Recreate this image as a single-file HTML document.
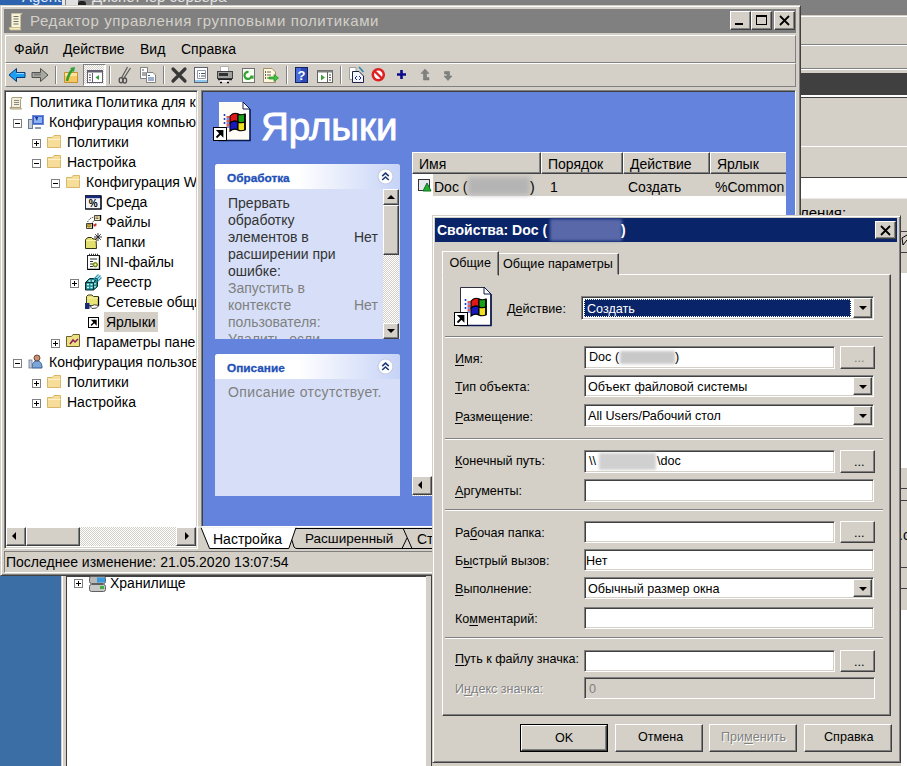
<!DOCTYPE html>
<html><head><meta charset="utf-8">
<style>
*{margin:0;padding:0;box-sizing:border-box}
html,body{width:907px;height:766px;overflow:hidden;background:#D4D0C8}
body{position:relative;font-family:"Liberation Sans",sans-serif;font-size:14px;color:#000}
.a{position:absolute}
.t{position:absolute;white-space:pre;line-height:1}
.raised{border:1px solid;border-color:#fff #404040 #404040 #fff;box-shadow:inset -1px -1px #808080,inset 1px 1px #D4D0C8;background:#D4D0C8}
.sunk{border:1px solid;border-color:#808080 #fff #fff #808080;box-shadow:inset 1px 1px #404040,inset -1px -1px #D4D0C8;background:#fff}
.thin{border:1px solid;border-color:#808080 #fff #fff #808080}
.winframe{border:1px solid;border-color:#D4D0C8 #404040 #404040 #D4D0C8;box-shadow:inset 1px 1px #fff,inset -1px -1px #808080;background:#D4D0C8}
.hsep{height:2px;border-top:1px solid #808080;border-bottom:1px solid #fff}
.vsep{width:2px;border-left:1px solid #808080;border-right:1px solid #fff}
.dl{font-size:12.6px}
u{text-decoration:underline;text-underline-offset:1.5px;text-decoration-thickness:1px}
.tp{font-size:14px}
.dither{background-color:#fff;background-image:linear-gradient(45deg,#D4D0C8 25%,transparent 25%,transparent 75%,#D4D0C8 75%),linear-gradient(45deg,#D4D0C8 25%,transparent 25%,transparent 75%,#D4D0C8 75%);background-size:2px 2px;background-position:0 0,1px 1px}
</style></head><body>

<!-- ===== background: top strip ===== -->
<div class="a" style="left:0;top:0;width:907px;height:15px;background:#808080"></div>
<div class="a" style="left:0;top:0;width:62px;height:5px;background:#2D62AE"></div>
<div class="t" style="left:22px;top:-11px;font-size:15px;color:#DDEBFF">Agent</div>
<div class="a" style="left:62px;top:0;width:3px;height:5px;background:#E8E8E8"></div>
<div class="a" style="left:66px;top:0;width:12px;height:5px;background:#E0E0E0"></div>
<div class="a" style="left:78px;top:1px;width:8px;height:4px;background:#202020;border-radius:3px 3px 0 0"></div>
<div class="t" style="left:92px;top:-11px;font-size:15px;color:#E4E4E4">Диспетчер сервера</div>
<!-- ===== background: right window ===== -->
<div class="a" style="left:800px;top:15px;width:107px;height:751px;background:#D4D0C8"></div>
<div class="a" style="left:800px;top:15px;width:107px;height:1px;background:#D4D0C8"></div>
<div class="a" style="left:800px;top:16px;width:107px;height:1px;background:#fff"></div>
<div class="a" style="left:800px;top:44px;width:107px;height:1px;background:#808080"></div>
<div class="a" style="left:800px;top:45px;width:107px;height:1px;background:#fff"></div>
<div class="a" style="left:800px;top:68px;width:107px;height:1px;background:#808080"></div>
<div class="a" style="left:800px;top:69px;width:107px;height:1px;background:#fff"></div>
<div class="a" style="left:800px;top:73px;width:107px;height:22px;background:#404040"></div>
<div class="a" style="left:800px;top:95px;width:107px;height:1.5px;background:#fff"></div>
<div class="a" style="left:800px;top:97px;width:107px;height:1px;background:#404040"></div>
<div class="a" style="left:800px;top:146px;width:107px;height:1px;background:#fff"></div>
<div class="a" style="left:800px;top:177px;width:107px;height:1px;background:#404040"></div>
<div class="a" style="left:800px;top:178px;width:107px;height:20px;background:#fff"></div>
<div class="a" style="left:800px;top:198px;width:107px;height:1px;background:#E8E8E8"></div>
<div class="t" style="left:800px;top:204.5px;font-size:15px;color:#000">ления:</div>
<div class="a" style="left:901px;top:231px;width:6px;height:1px;background:#404040"></div>
<div class="a" style="left:901px;top:252px;width:6px;height:1px;background:#404040"></div>
<div class="a" style="left:901px;top:273px;width:6px;height:195px;background:#fff"></div>
<div class="a" style="left:901px;top:488px;width:6px;height:1px;background:#404040"></div>
<div class="a" style="left:901px;top:500px;width:6px;height:1px;background:#404040"></div>
<div class="a" style="left:901px;top:567px;width:6px;height:1px;background:#404040"></div>
<div class="a" style="left:901px;top:588px;width:6px;height:1px;background:#404040"></div>
<div class="a" style="left:901px;top:610px;width:6px;height:156px;background:#fff"></div>
<svg class="a" style="left:901px;top:234px" width="6" height="14"><path d="M1 4 L6 1 M1 4 L2 11 L6 6" stroke="#000" stroke-width="1" fill="none"/></svg>
<div class="t" style="left:899px;top:527.5px;font-size:14px">.c</div>
<!-- ===== background: bottom-left window ===== -->
<div class="a" style="left:0;top:576px;width:61px;height:190px;background:#3A6EA5"></div>
<div class="a" style="left:61px;top:575px;width:371px;height:191px;background:#D4D0C8"></div>
<div class="a" style="left:62px;top:575px;width:1px;height:191px;background:#fff"></div>
<div class="a" style="left:66px;top:576px;width:360px;height:190px;background:#fff;border-left:1px solid #404040;border-top:1px solid #404040"></div>
<div class="a" style="left:431px;top:576px;width:1px;height:190px;background:#404040"></div>
<div class="a" style="left:74px;top:579px;width:9px;height:9px;border:1px solid #808080;background:#fff"><div class="a" style="left:1px;top:3px;width:5px;height:1px;background:#000"></div><div class="a" style="left:3px;top:1px;width:1px;height:5px;background:#000"></div></div>
<svg class="a" style="left:89px;top:576px" width="18" height="16"><rect x="0.5" y="0.5" width="16" height="7" rx="2" fill="#B8B8B8" stroke="#606060"/><rect x="8" y="1.5" width="8" height="5" fill="#3A9AE0"/><rect x="0.5" y="8.5" width="16" height="7" rx="2" fill="#C8C8C8" stroke="#606060"/><rect x="11" y="10" width="4" height="3" fill="#40B040"/></svg>
<div class="t" style="left:110px;top:575.5px">Хранилище</div>
<!-- ===== main window ===== -->
<div id="main" class="a winframe" style="left:0;top:5px;width:801px;height:571px"></div>
<!-- title bar -->
<div class="a" style="left:4px;top:9px;width:792px;height:24px;background:#808080"></div>
<div class="t" style="left:30px;top:13px;font-size:15px;letter-spacing:0.6px;color:#D4D0C8">Редактор управления групповыми политиками</div>
<div class="a raised" style="left:730px;top:11px;width:21px;height:19px"><div class="a" style="left:4px;top:11px;width:8px;height:2px;background:#000"></div></div>
<div class="a raised" style="left:751px;top:11px;width:21px;height:19px"><div class="a" style="left:4px;top:3px;width:11px;height:10px;border:1px solid #000;border-top-width:2px"></div></div>
<div class="a raised" style="left:774px;top:11px;width:21px;height:19px"><svg class="a" style="left:4px;top:3px" width="12" height="11"><path d="M1 1L10 10M10 1L1 10" stroke="#000" stroke-width="1.8"/></svg></div>
<!-- menubar -->
<div class="a" style="left:5px;top:35px;width:791px;height:28px;border:1px solid;border-color:#fff #808080 #808080 #fff"></div>
<div class="t" style="left:14px;top:42px">Файл</div>
<div class="t" style="left:63px;top:42px">Действие</div>
<div class="t" style="left:140px;top:42px">Вид</div>
<div class="t" style="left:181px;top:42px">Справка</div>
<!-- toolbar -->
<div class="a" style="left:5px;top:63px;width:791px;height:24px;border:1px solid;border-color:#fff #808080 #808080 #fff"></div>
<!-- tree pane -->
<div class="a sunk" style="left:4px;top:90px;width:194px;height:459px"></div>
<!-- toolbar icons -->
<svg class="a" style="left:6px;top:64px" width="460" height="22">
<!-- back -->
<path d="M3 11 L10.5 4.5 V8.5 H19 V13.5 H10.5 V17.5 Z" fill="#1EA0F0" stroke="#0A3A7A" stroke-width="1"/>
<path d="M10.5 9.5 H18" stroke="#9AD8FF" stroke-width="1"/>
<!-- forward -->
<path d="M42 11 L34.5 4.5 V8.5 H26 V13.5 H34.5 V17.5 Z" fill="#A8A8A0" stroke="#505050" stroke-width="1"/>
<path d="M28 10.5 H35" stroke="#808080" stroke-width="2"/>
<!-- sep -->
<path d="M49.5 2 V20" stroke="#808080"/><path d="M50.5 2 V20" stroke="#fff"/>
<!-- up folder -->
<path d="M58.5 8.5 H71.5 V18.5 H58.5 Z" fill="#F6C860" stroke="#C89030"/>
<path d="M59 9 H71 V12 H59z" fill="#FBE6A8"/>
<path d="M61 17 C 62 12, 64 8, 67 5" stroke="#30A030" stroke-width="2.5" fill="none"/>
<path d="M64 4 L69 3 L68 8 Z" fill="#30A030"/>
<!-- pressed button -->
<rect x="77" y="0" width="22" height="21" fill="#fff"/>
</svg>
<div class="a dither" style="left:84px;top:65px;width:20px;height:19px"></div>
<div class="a" style="left:83px;top:64px;width:23px;height:22px;border:1px solid;border-color:#808080 #fff #fff #808080"></div>
<svg class="a" style="left:86px;top:69px" width="18" height="15">
<rect x="1.5" y="1.5" width="15" height="12" fill="#fff" stroke="#606070"/>
<rect x="1.5" y="1.5" width="15" height="2" fill="#606070"/>
<path d="M6.5 4 V13.5" stroke="#606070"/>
<path d="M3 6h2M3 8.5h2M3 11h2" stroke="#606070"/>
<path d="M13 6 L9.5 8.5 L13 11z" fill="#30A030"/>
</svg>
<svg class="a" style="left:6px;top:64px" width="460" height="22" style="pointer-events:none">
<path d="M103.5 2 V20" stroke="#808080"/><path d="M104.5 2 V20" stroke="#fff"/>
<!-- scissors -->
<path d="M121.5 3 L 115.5 14 M 124.5 4 L 118 14" stroke="#606060" stroke-width="1.3" fill="none"/>
<ellipse cx="115" cy="16.2" rx="1.8" ry="2.6" fill="none" stroke="#505050" stroke-width="1.3"/>
<ellipse cx="118.8" cy="16.6" rx="1.8" ry="2.6" fill="none" stroke="#505050" stroke-width="1.3"/>
<!-- copy -->
<path d="M134.5 3.5 H141.5 V14.5 H134.5z" fill="#fff" stroke="#808080"/>
<path d="M136 6h2M136 9h4M136 11h4" stroke="#505050"/>
<path d="M140.5 8.5 H147 L149.5 11 V18.5 H140.5z" fill="#fff" stroke="#808080"/>
<path d="M142 11.5h2M142 14h6M142 16h6" stroke="#3A5A9A"/>
<path d="M157.5 2 V20" stroke="#808080"/><path d="M158.5 2 V20" stroke="#fff"/>
<!-- delete -->
<path d="M167 5 L179 17 M179 5 L167 17" stroke="#383838" stroke-width="3.2" stroke-linecap="round"/>
<!-- properties -->
<rect x="188.5" y="3.5" width="13" height="15" fill="#fff" stroke="#606070"/>
<rect x="189" y="16" width="12" height="2" fill="#8CC8F0"/>
<path d="M191.5 6.5 H199.5 V14.5 H191.5z" fill="none" stroke="#9098A8"/>
<path d="M193 9.5h1M195 9.5h4M193 12h1M195 12h4" stroke="#505060"/>
<!-- print -->
<path d="M214.5 2.5 H222.5 V8 H214.5z" fill="#fff" stroke="#B0B0B0"/>
<rect x="211.5" y="7.5" width="15" height="7" fill="#A0A0A0" stroke="#404040"/>
<rect x="213" y="9" width="9" height="3" fill="#303030"/>
<path d="M212 15.5 H226" stroke="#202020" stroke-width="1.5"/>
<path d="M214 17 H223" stroke="#fff" stroke-width="1.6"/>
<path d="M214 18.5 H216 M221 18.5 H223" stroke="#000" stroke-width="1.4"/>
<!-- refresh -->
<rect x="236.5" y="4.5" width="12" height="14" fill="#F4FFF0" stroke="#707070"/>
<path d="M245.5 11.5 A 3.5 3.5 0 1 1 242.5 8" stroke="#30A030" stroke-width="2.2" fill="none"/>
<path d="M244.5 14 L247.5 11 L247.5 15z" fill="#30A030"/>
<!-- export -->
<path d="M257.5 4.5 H266 L269.5 8 V18.5 H257.5z" fill="#FFF8DC" stroke="#A09070"/>
<path d="M259 8h1M259 11h1M259 14h1" stroke="#303030" stroke-width="1.4"/>
<path d="M261 8h4M261 11h4M261 14h4" stroke="#606060"/>
<path d="M263 13 H268 V10.5 L272.5 14 L268 17.5 V15 H263z" fill="#40C040" stroke="#209020" stroke-width="0.7"/>
<path d="M280.5 2 V20" stroke="#808080"/><path d="M281.5 2 V20" stroke="#fff"/>
<!-- help -->
<rect x="289.5" y="3.5" width="12" height="15" fill="#2A4AB8" stroke="#102060"/>
<rect x="290" y="4" width="5" height="14" fill="#4A6AD8"/>
<text x="295.5" y="16" font-size="13" font-weight="bold" font-family="Liberation Sans" fill="#fff" text-anchor="middle">?</text>
<!-- action pane -->
<rect x="311.5" y="6.5" width="15" height="12" fill="#fff" stroke="#606060"/>
<rect x="311.5" y="6.5" width="15" height="2" fill="#808080"/>
<path d="M321.5 8 V18.5" stroke="#606060"/>
<path d="M323 11h2M323 13.5h2M323 16h2" stroke="#505050"/>
<path d="M315 10.5 L319 13.5 L315 16.5z" fill="#40A040"/>
<path d="M334.5 2 V20" stroke="#808080"/><path d="M335.5 2 V20" stroke="#fff"/>
<!-- xml doc -->
<path d="M343.5 3.5 H350 V15.5 H343.5z" fill="#fff" stroke="#A0A0A0"/>
<path d="M346.5 7.5 H353 L357.5 12 V18.5 H346.5z" fill="#F4F4FF" stroke="#202040"/>
<path d="M353 3 L357.5 8" stroke="#2A8AA8" stroke-width="1.6"/>
<path d="M351 12 L349 14 L351 16 M353 12 L355 14 L353 16" stroke="#1A2A8A" fill="none"/>
<!-- stop -->
<circle cx="372.3" cy="10.7" r="5.5" fill="#fff" stroke="#E02020" stroke-width="2.6"/>
<path d="M368.5 7 L376 14.5" stroke="#E02020" stroke-width="2.4"/>
<!-- plus -->
<path d="M395.5 6 V15 M391 10.5 H400" stroke="#0A0A8A" stroke-width="2.6"/>
<!-- up -->
<path d="M419 5 L415 9.5 H417.5 V16 H423 V13.5 H420.5 V9.5 H423z" fill="#808080" stroke="#707070" stroke-width="0.5"/>
<!-- down -->
<path d="M442 16.5 L446 12 H443.5 V7.5 H438.5 V10 H441 V12 H438z" fill="#808080" stroke="#707070" stroke-width="0.5"/>
</svg>
<!-- title icon -->
<svg class="a" style="left:8px;top:12px" width="16" height="19">
<path d="M3.5 1.5 H14 L12.5 3 V15.5 H3.5z" fill="#F8F4D8" stroke="#C8C0A0"/>
<path d="M5.5 4.5h5M5.5 7h5M5.5 9.5h5M5.5 12h5" stroke="#707068" stroke-width="1.2"/>
<path d="M1 15.5 H12 L13 18 H2z" fill="#F4EAC0" stroke="#C8B890" stroke-width="0.8"/>
</svg>
<!-- tree -->
<div class="a" style="left:6px;top:92px;width:190px;height:434px;background:#fff;overflow:hidden">
<svg class="a" style="left:3px;top:4px" width="15" height="14"><path d="M3 1.5h10l-1.5 2v8.5h-9v-8.5z" fill="#F3EFD8" stroke="#A89F80"/><path d="M1 11.5h10.5l1 1.5h-11z" fill="#E8E0B8" stroke="#A89F80"/><path d="M5 4.5h5M5 6.5h5M5 8.5h5" stroke="#888"/></svg>
<div class="t" style="left:24px;top:2.85px;">Политика Политика для к</div>

<div class="a" style="left:7px;top:27px;width:9px;height:9px;border:1px solid #808080;background:#fff"><div class="a" style="left:1px;top:3px;width:5px;height:1px;background:#000"></div></div>

<svg class="a" style="left:22px;top:23px" width="16" height="14"><rect x="4.5" y="0.5" width="11" height="9" fill="#3C5FD8" stroke="#6F8AC8"/><rect x="6" y="2" width="8" height="6" fill="#8CB4F4"/><path d="M7 13h6" stroke="#8C9AB0" stroke-width="2"/><rect x="0.5" y="4.5" width="4" height="9" fill="#C4CCD8" stroke="#6A7A9A"/><path d="M7 2l3 0l-1 4z" fill="#1A2A8A"/></svg>
<div class="t" style="left:43px;top:22.85px;">Конфигурация компью</div>

<div class="a" style="left:26px;top:47px;width:9px;height:9px;border:1px solid #808080;background:#fff"><div class="a" style="left:1px;top:3px;width:5px;height:1px;background:#000"></div><div class="a" style="left:3px;top:1px;width:1px;height:5px;background:#000"></div></div>

<svg class="a" style="left:41px;top:43px" width="15" height="13"><path d="M0.5 2.5h5l1.5 -2h6.5v12h-13z" fill="#F7DD9A" stroke="#D8B868"/><path d="M1 4.5h12.5" stroke="#FFF2C8"/></svg>

<div class="t" style="left:61px;top:42.85px;">Политики</div>

<div class="a" style="left:26px;top:67px;width:9px;height:9px;border:1px solid #808080;background:#fff"><div class="a" style="left:1px;top:3px;width:5px;height:1px;background:#000"></div></div>

<svg class="a" style="left:41px;top:63px" width="15" height="13"><path d="M0.5 2.5h5l1.5 -2h6.5v12h-13z" fill="#F7DD9A" stroke="#D8B868"/><path d="M1 4.5h12.5" stroke="#FFF2C8"/></svg>

<div class="t" style="left:61px;top:62.85px;">Настройка</div>

<div class="a" style="left:45px;top:87px;width:9px;height:9px;border:1px solid #808080;background:#fff"><div class="a" style="left:1px;top:3px;width:5px;height:1px;background:#000"></div></div>

<svg class="a" style="left:60px;top:83px" width="15" height="13"><path d="M0.5 2.5h5l1.5 -2h6.5v12h-13z" fill="#F7DD9A" stroke="#D8B868"/><path d="M1 4.5h12.5" stroke="#FFF2C8"/></svg>

<div class="t" style="left:80px;top:82.85px;">Конфигурация W</div>

<svg class="a" style="left:79px;top:103px" width="17" height="15"><rect x="0.5" y="0.5" width="15.5" height="13.5" fill="#F4F4F8" stroke="#20284A"/><rect x="1" y="1" width="15" height="2.2" fill="#1A2A7A"/><path d="M0.5 14 H16 V1" stroke="#000" stroke-width="1.2" fill="none"/><text x="8.3" y="12.3" font-size="10" font-weight="bold" font-family="Liberation Sans" text-anchor="middle" fill="#000">%</text></svg>
<div class="t" style="left:100px;top:102.85px;">Среда</div>

<svg class="a" style="left:79px;top:121px" width="17" height="17"><path d="M9.5 2.5h6v5h-6z" fill="#F8F0C0" stroke="#303030" stroke-width="0.9"/><path d="M10.5 4h3M10.5 5.5h3" stroke="#807040"/><path d="M15.5 2v5.5" stroke="#000" stroke-width="1.4"/><path d="M1.5 10.5h6v5h-6z" fill="#F0E090" stroke="#303030" stroke-width="0.9"/><circle cx="4" cy="12.5" r="1.6" fill="#D0B040" stroke="#504010" stroke-width="0.6"/><path d="M7.5 15.5V10" stroke="#000" stroke-width="1.2"/><path d="M2.5 9 L5 5.5 L9 4" stroke="#404040" stroke-dasharray="1.2 1" fill="none"/><path d="M6.5 10.5 L9.5 7" stroke="#404040" stroke-dasharray="1.2 1"/><path d="M11 10.5 L9.5 13.5 M8.5 12 L11.5 12" stroke="#C02828" stroke-width="1.3"/></svg>
<div class="t" style="left:100px;top:122.85px;">Файлы</div>

<svg class="a" style="left:79px;top:140px" width="17" height="17"><path d="M0.5 7.5 L3 5.5 H6.5 L8 7 H11 L11.5 16.5 H0.5z" fill="#E4E070" stroke="#303010" stroke-width="1"/><path d="M1 8.5 H11" stroke="#F8F4A8"/><path d="M13 1v8M9 5h8M10.2 2.2l5.6 5.6M15.8 2.2l-5.6 5.6" stroke="#202020" stroke-width="0.9"/></svg>
<div class="t" style="left:100px;top:142.85px;">Папки</div>

<svg class="a" style="left:81px;top:161px" width="14" height="17"><rect x="0.5" y="2.5" width="12" height="14" fill="#fff" stroke="#202020"/><path d="M12.5 3 V16.5 H1" stroke="#000" stroke-width="1.3" fill="none"/><path d="M2 1.5h1M4 1.5h1M6 1.5h1M8 1.5h1M10 1.5h1" stroke="#303030" stroke-width="1.4"/><path d="M3 6h7M3 8.5h3M3 11h3M3 13.5h3" stroke="#303030" stroke-width="1.1"/><circle cx="8.3" cy="11.7" r="2.2" fill="#A8C020" stroke="#586010" stroke-width="0.8"/><circle cx="8.3" cy="11.7" r="0.8" fill="#fff"/></svg>
<div class="t" style="left:100px;top:162.85px;">INI-файлы</div>

<div class="a" style="left:64px;top:187px;width:9px;height:9px;border:1px solid #808080;background:#fff"><div class="a" style="left:1px;top:3px;width:5px;height:1px;background:#000"></div><div class="a" style="left:3px;top:1px;width:1px;height:5px;background:#000"></div></div>

<svg class="a" style="left:79px;top:182px" width="17" height="17"><path d="M0.5 8.5 L4.5 4.5 H12.5 V12.5 L8.5 16 H0.5z" fill="#1E8A90" stroke="#0A2A30" stroke-width="1"/><path d="M0.5 8.5 H8.5 V16 M8.5 8.5 L12.5 4.5" stroke="#0A2A30" stroke-width="0.9" fill="none"/><path d="M2 10.5h2M5.5 10.5h2M2 13.5h2M5.5 13.5h2M3.5 7h2M7 7h2M10 9v1.5M10 12v1.5" stroke="#C8FFFF" stroke-width="1.4"/><path d="M9 5 L13.5 0.5 M11 6 L15.5 1.5 M12.5 7.5 L16.5 3.5" stroke="#2A9AB0" stroke-width="1.3"/></svg>
<div class="t" style="left:100px;top:182.85px;">Реестр</div>

<svg class="a" style="left:79px;top:202px" width="17" height="16"><path d="M1.5 2.5 L3 1 H7 L8.5 2.5 H13.5 V11.5 H1.5z" fill="#E8E478" stroke="#404020"/><path d="M13.5 3v9" stroke="#000" stroke-width="1.3"/><path d="M2.5 4 H13" stroke="#F8F4B0"/><path d="M5 12.5 Q 9 9.5 14 11.5 Q 12 15 7 14.5z" fill="#fff" stroke="#303030" stroke-width="0.9"/><rect x="0" y="9" width="4.5" height="6" fill="#1A2A7A"/></svg>
<div class="t" style="left:100px;top:202.85px;">Сетевые общи</div>

<div class="a" style="left:98px;top:220px;width:54px;height:20px;background:#D4D0C8"></div>
<svg class="a" style="left:82px;top:225px" width="11" height="11"><rect x="0.5" y="0.5" width="10" height="10" fill="#fff" stroke="#000"/><path d="M3 8.5l4-4M4.5 3.5h3.5v3.5z" stroke="#000" fill="#000" stroke-width="1.4"/></svg>
<div class="t" style="left:100px;top:222.85px;">Ярлыки</div>

<div class="a" style="left:45px;top:247px;width:9px;height:9px;border:1px solid #808080;background:#fff"><div class="a" style="left:1px;top:3px;width:5px;height:1px;background:#000"></div><div class="a" style="left:3px;top:1px;width:1px;height:5px;background:#000"></div></div>

<svg class="a" style="left:60px;top:242px" width="15" height="13"><path d="M0.5 2.5h5l1.5-2h6.5v12h-13z" fill="#EEE080" stroke="#6A6030"/><path d="M4 10l3-4l2 2l3-3" stroke="#8A2060" stroke-width="1.5" fill="none"/></svg>
<div class="t" style="left:80px;top:242.85px;">Параметры пане</div>

<div class="a" style="left:7px;top:267px;width:9px;height:9px;border:1px solid #808080;background:#fff"><div class="a" style="left:1px;top:3px;width:5px;height:1px;background:#000"></div></div>

<svg class="a" style="left:22px;top:262px" width="15" height="15"><circle cx="9" cy="4" r="3" fill="#C89070" stroke="#6A4A3A"/><path d="M4 14c0-5 2-7 5-7s5 2 5 7z" fill="#7AA6D8" stroke="#3A5A8A"/><rect x="1" y="6" width="3" height="8" fill="#C4CCD8" stroke="#6A7A9A" stroke-width="0.8"/></svg>
<div class="t" style="left:43px;top:262.85px;">Конфигурация пользов</div>

<div class="a" style="left:26px;top:287px;width:9px;height:9px;border:1px solid #808080;background:#fff"><div class="a" style="left:1px;top:3px;width:5px;height:1px;background:#000"></div><div class="a" style="left:3px;top:1px;width:1px;height:5px;background:#000"></div></div>

<svg class="a" style="left:41px;top:283px" width="15" height="13"><path d="M0.5 2.5h5l1.5 -2h6.5v12h-13z" fill="#F7DD9A" stroke="#D8B868"/><path d="M1 4.5h12.5" stroke="#FFF2C8"/></svg>

<div class="t" style="left:61px;top:282.85px;">Политики</div>

<div class="a" style="left:26px;top:307px;width:9px;height:9px;border:1px solid #808080;background:#fff"><div class="a" style="left:1px;top:3px;width:5px;height:1px;background:#000"></div><div class="a" style="left:3px;top:1px;width:1px;height:5px;background:#000"></div></div>

<svg class="a" style="left:41px;top:303px" width="15" height="13"><path d="M0.5 2.5h5l1.5 -2h6.5v12h-13z" fill="#F7DD9A" stroke="#D8B868"/><path d="M1 4.5h12.5" stroke="#FFF2C8"/></svg>

<div class="t" style="left:61px;top:302.85px;">Настройка</div>

</div>
<div class="a dither" style="left:6px;top:527px;width:190px;height:19px"></div>
<div class="a raised" style="left:6px;top:527px;width:20px;height:19px"><div class="a" style="left:5px;top:4px;width:0;height:0;border-top:4px solid transparent;border-bottom:4px solid transparent;border-right:4px solid #000"></div></div>
<div class="a raised" style="left:26px;top:527px;width:54px;height:19px"></div>
<div class="a raised" style="left:176px;top:527px;width:20px;height:19px"><div class="a" style="left:8px;top:4px;width:0;height:0;border-top:4px solid transparent;border-bottom:4px solid transparent;border-left:4px solid #000"></div></div>
<!-- blue pane -->
<div class="a" style="left:201px;top:90px;width:595px;height:437px;border:1px solid;border-color:#808080 #fff #fff #808080;box-shadow:inset 1px 1px #404040"></div>
<div class="a" style="left:203px;top:92px;width:592px;height:434px;background:#6383DC"></div>
<svg class="a" style="left:212px;top:100px" width="42" height="44">
<path d="M7 2h24l7 7v31h-31z" fill="#FFFDF6"/>
<path d="M38 9v31.5h-31.5" stroke="#0A1A50" stroke-width="1.6" fill="none"/>
<path d="M31 2v7h7z" fill="#fff" stroke="#0A1A50" stroke-width="1"/>
<path d="M12.5 14v2M12.5 18v2M12.5 22v2" stroke="#2040D0" stroke-width="1.6"/>
<path d="M14.5 17h3M14.5 21h3M14.5 25h3" stroke="#E02020" stroke-width="1.6"/>
<path d="M14.5 19h3M14.5 23h3M14.5 27h3" stroke="#2020B0" stroke-width="1.2"/>
<path d="M18 16 C 21 12.5, 24 13, 26 14 V 22 C 24 21, 21 20.5, 18 23z" fill="#E01818" stroke="#000" stroke-width="1.1"/>
<path d="M26 14 C 28 15, 30.5 15, 33 14 V 22 C 30.5 23, 28 23, 26 22z" fill="#18A018" stroke="#000" stroke-width="1.1"/>
<path d="M18 23 C 21 20.5, 24 21, 26 22 V 30 C 24 29, 21 28.5, 18 31z" fill="#1818C0" stroke="#000" stroke-width="1.1"/>
<path d="M26 22 C 28 23, 30.5 23, 33 22 V 30 C 30.5 31, 28 31, 26 30z" fill="#F0E020" stroke="#000" stroke-width="1.1"/>
<path d="M33 14 V30" stroke="#000" stroke-width="1.6"/>
<rect x="1.5" y="27.5" width="13" height="13" fill="#fff" stroke="#000"/>
<path d="M4.5 37.5l5-5M6 31h4.5v4.5z" stroke="#000" fill="#000" stroke-width="1.8"/>
</svg>
<div class="t" style="left:261px;top:107.9px;font-size:38.5px;color:#fff;-webkit-text-stroke:0.9px #fff">Ярлыки</div>
<div class="a" style="left:215px;top:164px;width:185px;height:175px;background:#D6DFF7;border-radius:3px 3px 0 0;overflow:hidden"><div class="a" style="left:0;top:0;width:185px;height:25px;background:linear-gradient(90deg,#FFFFFF 0%,#FFFFFF 45%,#C6D3F7 100%)"></div><div class="t" style="left:12px;top:8.7px;font-size:11.8px;font-weight:bold;color:#1E50B8;-webkit-text-stroke:0.3px #1E50B8">Обработка</div><svg class="a" style="left:162px;top:3.5px" width="17" height="17"><circle cx="8.5" cy="8.5" r="7.5" fill="#fff" stroke="#C4CCE4" stroke-width="1.2"/><path d="M5.2 8.2l3.3-3l3.3 3M5.2 12l3.3-3l3.3 3" stroke="#1C3A7A" stroke-width="1.6" fill="none"/></svg></div>
<div class="a" style="left:215px;top:189px;width:168px;height:150px;overflow:hidden"><div class="t tp" style="left:13px;top:6.7px;color:#333">Прервать</div><div class="t tp" style="left:13px;top:23.6px;color:#333">обработку</div><div class="t tp" style="left:13px;top:40.6px;color:#333">элементов в</div><div class="t tp" style="left:139px;top:40.6px;color:#333">Нет</div><div class="t tp" style="left:13px;top:57.6px;color:#333">расширении при</div><div class="t tp" style="left:13px;top:74.7px;color:#333">ошибке:</div><div class="t tp" style="left:13px;top:91.7px;color:#808080">Запустить в</div><div class="t tp" style="left:13px;top:108.7px;color:#808080">контексте</div><div class="t tp" style="left:139px;top:108.7px;color:#808080">Нет</div><div class="t tp" style="left:13px;top:125.7px;color:#808080">пользователя:</div><div class="t tp" style="left:13px;top:142.7px;color:#808080">Удалить, если</div></div>
<div class="a dither" style="left:383px;top:189px;width:16px;height:150px"></div>
<div class="a raised" style="left:383px;top:189px;width:16px;height:16px"><div class="a" style="left:3px;top:5px;width:0;height:0;border-left:4px solid transparent;border-right:4px solid transparent;border-bottom:4px solid #000"></div></div>
<div class="a raised" style="left:383px;top:205px;width:16px;height:50px"></div>
<div class="a raised" style="left:383px;top:323px;width:16px;height:16px"><div class="a" style="left:3px;top:5px;width:0;height:0;border-left:4px solid transparent;border-right:4px solid transparent;border-top:4px solid #000"></div></div>
<div class="a" style="left:215px;top:354px;width:185px;height:142px;background:#D6DFF7;border-radius:3px 3px 0 0;overflow:hidden"><div class="a" style="left:0;top:0;width:185px;height:25px;background:linear-gradient(90deg,#FFFFFF 0%,#FFFFFF 45%,#C6D3F7 100%)"></div><div class="t" style="left:12px;top:8.7px;font-size:11.8px;font-weight:bold;color:#1E50B8;-webkit-text-stroke:0.3px #1E50B8">Описание</div><svg class="a" style="left:162px;top:3.5px" width="17" height="17"><circle cx="8.5" cy="8.5" r="7.5" fill="#fff" stroke="#C4CCE4" stroke-width="1.2"/><path d="M5.2 8.2l3.3-3l3.3 3M5.2 12l3.3-3l3.3 3" stroke="#1C3A7A" stroke-width="1.6" fill="none"/></svg></div>
<div class="t tp" style="left:228px;top:385px;color:#808080;letter-spacing:0.38px">Описание отсутствует.</div>
<div class="a" style="left:412px;top:152px;width:374px;height:344px;background:#fff;overflow:hidden"><div class="a raised" style="left:0px;top:0;width:129px;height:22px"><div class="t" style="left:6px;top:4px">Имя</div></div><div class="a raised" style="left:129px;top:0;width:82px;height:22px"><div class="t" style="left:6px;top:4px">Порядок</div></div><div class="a raised" style="left:211px;top:0;width:87px;height:22px"><div class="t" style="left:6px;top:4px">Действие</div></div><div class="a raised" style="left:298px;top:0;width:100px;height:22px"><div class="t" style="left:6px;top:4px">Ярлык</div></div><div class="a" style="left:21px;top:22px;width:353px;height:22px;background:#D4D0C8"></div><svg class="a" style="left:6px;top:27px" width="15" height="14"><rect x="0.5" y="0.5" width="11" height="11" fill="#E8E8F0" stroke="#333"/><path d="M5 12l4-8l4 8z" fill="#20B030" stroke="#107020"/></svg><div class="t" style="left:22px;top:27.5px">Doc (</div><div class="a" style="left:56px;top:25px;width:62px;height:18px;background:#B4B4B4;filter:blur(2.5px)"></div><div class="t" style="left:118px;top:27.5px">)</div><div class="t" style="left:138px;top:27.5px">1</div><div class="t" style="left:216px;top:27.5px">Создать</div><div class="t" style="left:303px;top:27.5px">%Common</div><div class="a dither" style="left:0;top:324px;width:374px;height:20px"></div><div class="a raised" style="left:0;top:324px;width:20px;height:19px"><div class="a" style="left:5px;top:4px;width:0;height:0;border-top:4px solid transparent;border-bottom:4px solid transparent;border-right:4px solid #000"></div></div></div>
<svg class="a" style="left:196px;top:525px" width="240" height="26">
<path d="M99 3 Q 95.5 3 94 9 L 98 22 Q 99 23.5 101 23.5 L 216 23.5 L 207 3 Z" fill="#D4D0C8"/>
<path d="M207.2 3.5 H 240" stroke="#000" stroke-width="1"/>
<path d="M101 3.5 H 207.2 L 216 23.5 H 101 Q 99 23.5 98 22 L 94 9 Q 95.5 3.5 101 3.5" fill="none" stroke="#000" stroke-width="1"/>
<path d="M211 13 L 206 23.5 H 240" stroke="#000" stroke-width="1" fill="none"/>
<path d="M5 2.5 L 13.5 23.5 L 92.8 23.5 L 100 2.5" fill="#fff" stroke="#000" stroke-width="1"/>
<path d="M0 2 H 240" stroke="#fff" stroke-width="1"/>
</svg>
<div class="t" style="left:213px;top:532px">Настройка</div>
<div class="t" style="left:305px;top:532px;font-size:13.5px">Расширенный</div>
<div class="t" style="left:417px;top:532px">Ст</div>
<!-- status bar -->
<div class="a" style="left:4px;top:551px;width:792px;height:22px;border:1px solid;border-color:#808080 #fff #fff #808080"></div>
<div class="t" style="left:6px;top:555px">Последнее изменение: 21.05.2020 13:07:54</div>


<!-- ===== dialog ===== -->
<div id="dlg" class="a winframe" style="left:432px;top:215px;width:469px;height:548px"></div>
<div class="a" style="left:435px;top:218px;width:462px;height:24px;background:#0A246A"></div>
<div class="t" style="left:437px;top:222.6px;font-weight:bold;color:#fff">Свойства: Doc (</div>
<div class="a" style="left:550px;top:219px;width:72px;height:22px;background:#5868A8;filter:blur(1.5px)"></div>
<div class="t" style="left:621px;top:222.6px;font-weight:bold;color:#fff">)</div>
<div class="a raised" style="left:875px;top:221px;width:21px;height:18px"><svg class="a" style="left:4px;top:3px" width="12" height="11"><path d="M1 1L10 10M10 1L1 10" stroke="#000" stroke-width="1.8"/></svg></div>
<div class="a" style="left:442px;top:274px;width:449px;height:442px;border:1px solid;border-color:#fff #404040 #404040 #fff;box-shadow:inset -1px -1px #808080"></div>
<div class="a" style="left:498px;top:253px;width:121px;height:22px;background:#D4D0C8;border:1px solid;border-color:#fff #404040 transparent #fff;box-shadow:inset -1px 0 #808080"></div>
<div class="t dl" style="left:503px;top:258.3px">Общие параметры</div>
<div class="a" style="left:442px;top:251px;width:57px;height:25px;background:#D4D0C8;border:1px solid;border-color:#fff #404040 transparent #fff;box-shadow:inset -1px 0 #808080"></div>
<div class="t dl" style="left:449.5px;top:257.3px">Общие</div>
<svg class="a" style="left:453px;top:285px" width="42" height="44">
<path d="M7.5 2.5h23.5l7 7v31h-30.5z" fill="#FFFFFF" stroke="#303040" stroke-width="1"/>
<path d="M38 9v31.5h-31.5" stroke="#0A1A50" stroke-width="1.6" fill="none"/>
<path d="M31 2v7h7z" fill="#fff" stroke="#0A1A50" stroke-width="1"/>
<path d="M12.5 14v2M12.5 18v2M12.5 22v2" stroke="#2040D0" stroke-width="1.6"/>
<path d="M14.5 17h3M14.5 21h3M14.5 25h3" stroke="#E02020" stroke-width="1.6"/>
<path d="M14.5 19h3M14.5 23h3M14.5 27h3" stroke="#2020B0" stroke-width="1.2"/>
<path d="M18 16 C 21 12.5, 24 13, 26 14 V 22 C 24 21, 21 20.5, 18 23z" fill="#E01818" stroke="#000" stroke-width="1.1"/>
<path d="M26 14 C 28 15, 30.5 15, 33 14 V 22 C 30.5 23, 28 23, 26 22z" fill="#18A018" stroke="#000" stroke-width="1.1"/>
<path d="M18 23 C 21 20.5, 24 21, 26 22 V 30 C 24 29, 21 28.5, 18 31z" fill="#1818C0" stroke="#000" stroke-width="1.1"/>
<path d="M26 22 C 28 23, 30.5 23, 33 22 V 30 C 30.5 31, 28 31, 26 30z" fill="#F0E020" stroke="#000" stroke-width="1.1"/>
<path d="M33 14 V30" stroke="#000" stroke-width="1.6"/>
<rect x="1.5" y="27.5" width="13" height="13" fill="#fff" stroke="#000"/>
<path d="M4.5 37.5l5-5M6 31h4.5v4.5z" stroke="#000" fill="#000" stroke-width="1.8"/>
</svg>
<div class="t dl" style="left:507px;top:302.9px;">Д<u>е</u>йствие:</div>
<div class="a sunk" style="left:581px;top:296px;width:293px;height:24px;"></div>
<div class="a" style="left:584px;top:299px;width:267px;height:18px;background:#0A246A;outline:1px dotted #fff;outline-offset:-1px"></div>
<div class="t dl" style="left:587px;top:302.5px;color:#fff">Создать</div>
<div class="a raised" style="left:853px;top:298px;width:19px;height:20px"><div class="a" style="left:5px;top:7px;width:0;height:0;border-left:4px solid transparent;border-right:4px solid transparent;border-top:4px solid #000"></div></div>
<div class="a hsep" style="left:445px;top:336px;width:438px"></div>
<div class="t dl" style="left:455px;top:353.3px;"><u>И</u>мя:</div>
<div class="a sunk" style="left:584px;top:346px;width:251px;height:23px;"></div>
<div class="t dl" style="left:589px;top:351px">Doc (</div>
<div class="a" style="left:620px;top:351px;width:55px;height:13px;background:#C8C8C8;filter:blur(1.8px)"></div>
<div class="t dl" style="left:675px;top:351px">)</div>
<div class="a raised" style="left:840px;top:346px;width:35px;height:23px"><div class="t dl" style="left:13px;top:5px;color:#808080">...</div></div>
<div class="t dl" style="left:455px;top:380.9px;"><u>Т</u>ип объекта:</div>
<div class="a sunk" style="left:584px;top:375px;width:290px;height:22px;"></div>
<div class="a raised" style="left:853px;top:377px;width:19px;height:18px"><div class="a" style="left:5px;top:7px;width:0;height:0;border-left:4px solid transparent;border-right:4px solid transparent;border-top:4px solid #000"></div></div>
<div class="t dl" style="left:588px;top:380.5px">Объект файловой системы</div>
<div class="t dl" style="left:455px;top:410.6px;"><u>Р</u>азмещение:</div>
<div class="a sunk" style="left:584px;top:404px;width:290px;height:23px;"></div>
<div class="a raised" style="left:853px;top:406px;width:19px;height:19px"><div class="a" style="left:5px;top:7px;width:0;height:0;border-left:4px solid transparent;border-right:4px solid transparent;border-top:4px solid #000"></div></div>
<div class="t dl" style="left:588px;top:410px">All Users/Рабочий стол</div>
<div class="a hsep" style="left:445px;top:438px;width:438px"></div>
<div class="t dl" style="left:455px;top:454.5px;"><u>К</u>онечный путь:</div>
<div class="a sunk" style="left:584px;top:450px;width:251px;height:23px;"></div>
<div class="t dl" style="left:589px;top:455px">\\</div>
<div class="a" style="left:599px;top:453px;width:57px;height:17px;background:#D0D0D0;filter:blur(1.5px)"></div>
<div class="t dl" style="left:657px;top:455px">\doc</div>
<div class="a raised" style="left:840px;top:450px;width:35px;height:23px"><div class="t dl" style="left:13px;top:5px">...</div></div>
<div class="t dl" style="left:455px;top:484.9px;"><u>А</u>ргументы:</div>
<div class="a sunk" style="left:584px;top:479px;width:290px;height:23px;"></div>
<div class="a hsep" style="left:445px;top:509px;width:438px"></div>
<div class="t dl" style="left:455px;top:526.5px;">Ра<u>б</u>очая папка:</div>
<div class="a sunk" style="left:584px;top:521px;width:251px;height:22px;"></div>
<div class="a raised" style="left:840px;top:521px;width:35px;height:22px"><div class="t dl" style="left:13px;top:5px">...</div></div>
<div class="t dl" style="left:455px;top:554.6px;">Б<u>ы</u>стрый вызов:</div>
<div class="a sunk" style="left:584px;top:549px;width:290px;height:22px;"></div>
<div class="t dl" style="left:586px;top:554.5px">Нет</div>
<div class="t dl" style="left:455px;top:582.7px;"><u>В</u>ыполнение:</div>
<div class="a sunk" style="left:584px;top:577px;width:290px;height:22px;"></div>
<div class="a raised" style="left:853px;top:579px;width:19px;height:18px"><div class="a" style="left:5px;top:7px;width:0;height:0;border-left:4px solid transparent;border-right:4px solid transparent;border-top:4px solid #000"></div></div>
<div class="t dl" style="left:588px;top:582.5px">Обычный размер окна</div>
<div class="t dl" style="left:455px;top:612.7px;">Ко<u>м</u>ментарий:</div>
<div class="a sunk" style="left:584px;top:607px;width:290px;height:22px;"></div>
<div class="a hsep" style="left:445px;top:637px;width:438px"></div>
<div class="t dl" style="left:455px;top:653.4px;"><u>П</u>уть к файлу значка:</div>
<div class="a sunk" style="left:584px;top:650px;width:251px;height:22px;"></div>
<div class="a raised" style="left:840px;top:650px;width:35px;height:22px"><div class="t dl" style="left:13px;top:5px">...</div></div>
<div class="t dl" style="left:455px;top:682.9px;color:#808080;text-shadow:1px 1px #fff">И<u>н</u>декс значка:</div>
<div class="a sunk" style="left:584px;top:677px;width:291px;height:22px;background:#D4D0C8"></div>
<div class="t dl" style="left:589px;top:682.5px;color:#808080">0</div>
<div class="a" style="left:520px;top:724px;width:88px;height:28px;border:1px solid #000"></div>
<div class="a raised" style="left:521px;top:725px;width:86px;height:26px"><div class="t dl" style="left:33px;top:6px">OK</div></div>
<div class="a raised" style="left:615px;top:724px;width:88px;height:28px"><div class="t dl" style="left:22px;top:6px">Отмена</div></div>
<div class="a raised" style="left:709px;top:724px;width:88px;height:28px"><div class="t dl" style="left:11px;top:6px;color:#808080;text-shadow:1px 1px #fff">При<u>м</u>енить</div></div>
<div class="a raised" style="left:804px;top:724px;width:88px;height:28px"><div class="t dl" style="left:19px;top:6px">Справка</div></div>


</body></html>
